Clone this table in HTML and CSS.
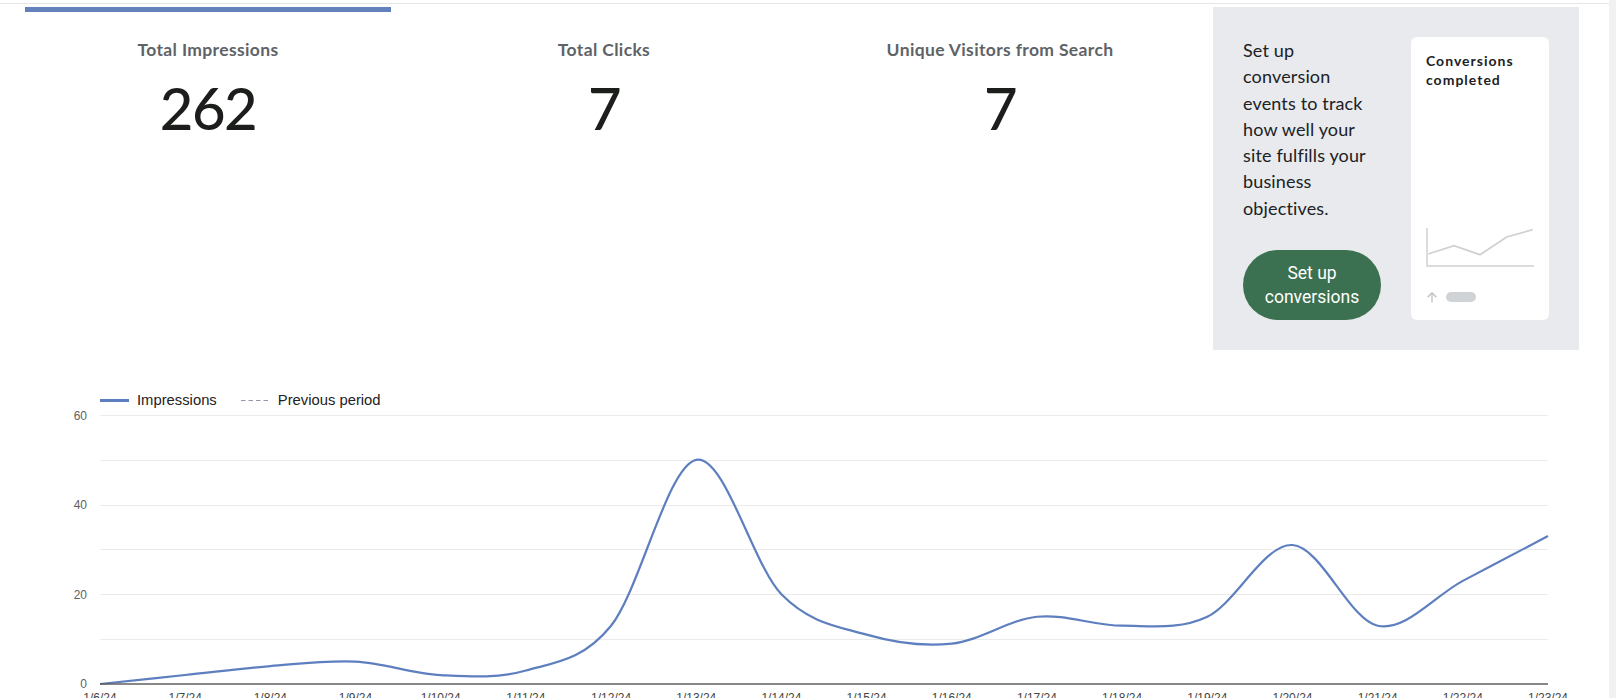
FILE: index.html
```html
<!DOCTYPE html>
<html lang="en">
<head>
<meta charset="utf-8">
<title>Search performance</title>
<link rel="stylesheet" href="styles.css">
</head>
<body>
<div class="page">
  <main class="report">
    <section class="summary">
      <div class="stat stat--active">
        <div class="stat-tab"></div>
        <h3 class="stat-label">Total Impressions</h3>
        <div class="stat-value">262</div>
      </div>
      <div class="stat">
        <div class="stat-tab"></div>
        <h3 class="stat-label">Total Clicks</h3>
        <div class="stat-value">7</div>
      </div>
      <div class="stat">
        <div class="stat-tab"></div>
        <h3 class="stat-label">Unique Visitors from Search</h3>
        <div class="stat-value">7</div>
      </div>
      <div class="promo-wrap">
        <aside class="promo">
          <div class="promo-body">
            <p class="promo-text">Set up<br>conversion<br>events to track<br>how well your<br>site fulfills your<br>business<br>objectives.</p>
            <button class="promo-btn" type="button">Set up<br>conversions</button>
          </div>
          <div class="preview">
            <div class="preview-title">Conversions completed</div>
            <svg class="preview-chart" width="108" height="40" viewBox="0 0 108 40">
              <path d="M1 1V39H108" fill="none" stroke="#dcdcdc" stroke-width="2"/>
              <polyline points="2.3,27 28,18.7 54,27.7 80.7,10 106.7,2.7" fill="none" stroke="#d0d0d0" stroke-width="1.8"/>
            </svg>
            <div class="preview-foot">
              <svg class="preview-arrow" width="12" height="12" viewBox="0 0 12 12">
                <path d="M6 11.5V1.8M1.6 6.2L6 1.8L10.4 6.2" fill="none" stroke="#bdc1c6" stroke-width="1.3"/>
              </svg>
              <span class="preview-pill"></span>
            </div>
          </div>
        </aside>
      </div>
    </section>

    <section class="chart">
      <div class="legend">
        <span class="legend-swatch legend-swatch--solid"></span>
        <span class="legend-label">Impressions</span>
        <svg class="legend-dash" width="27" height="3" viewBox="0 0 27 3">
          <line x1="0" y1="1.5" x2="27" y2="1.5" stroke="#8f96ae" stroke-width="1.2" stroke-dasharray="4.5 3"/>
        </svg>
        <span class="legend-label">Previous period</span>
      </div>
      <svg class="plot" width="1609" height="300" viewBox="0 0 1609 300">
        <g class="grid" stroke="#ebebeb" stroke-width="1">
          <line x1="100" y1="5.5" x2="1548" y2="5.5"/>
          <line x1="100" y1="50.5" x2="1548" y2="50.5"/>
          <line x1="100" y1="95.5" x2="1548" y2="95.5"/>
          <line x1="100" y1="139.5" x2="1548" y2="139.5"/>
          <line x1="100" y1="184.5" x2="1548" y2="184.5"/>
          <line x1="100" y1="229.5" x2="1548" y2="229.5"/>
        </g>
        <g class="y-labels">
          <text x="87" y="9.5">60</text>
          <text x="87" y="99">40</text>
          <text x="87" y="188.5">20</text>
          <text x="87" y="278">0</text>
        </g>
        <path id="impr-line" class="series" d=""/>
        <line class="baseline" x1="100" y1="274" x2="1548" y2="274"/>
        <g class="x-labels">
          <text x="100" y="291.5">1/6/24</text>
          <text x="185.18" y="291.5">1/7/24</text>
          <text x="270.35" y="291.5">1/8/24</text>
          <text x="355.53" y="291.5">1/9/24</text>
          <text x="440.71" y="291.5">1/10/24</text>
          <text x="525.88" y="291.5">1/11/24</text>
          <text x="611.06" y="291.5">1/12/24</text>
          <text x="696.24" y="291.5">1/13/24</text>
          <text x="781.41" y="291.5">1/14/24</text>
          <text x="866.59" y="291.5">1/15/24</text>
          <text x="951.76" y="291.5">1/16/24</text>
          <text x="1036.94" y="291.5">1/17/24</text>
          <text x="1122.12" y="291.5">1/18/24</text>
          <text x="1207.29" y="291.5">1/19/24</text>
          <text x="1292.47" y="291.5">1/20/24</text>
          <text x="1377.65" y="291.5">1/21/24</text>
          <text x="1462.82" y="291.5">1/22/24</text>
          <text x="1548" y="291.5">1/23/24</text>
        </g>
      </svg>
    </section>
  </main>
  <div class="scrollbar"></div>
</div>
<script src="script.js"></script>
</body>
</html>
```

FILE: styles.css
```css
* { box-sizing: border-box; }

html, body {
  margin: 0;
  padding: 0;
  background: #ffffff;
}

body {
  font-family: "Lato", "Noto Sans", sans-serif;
  color: #202124;
}

.page {
  display: flex;
  height: 698px;
  overflow: hidden;
}

.report {
  flex: 1;
  min-width: 0;
  padding-top: 3px;
}

.scrollbar {
  flex: none;
  width: 7px;
  background: #f1f1f1;
}

/* ---------- summary row ---------- */
.summary {
  display: grid;
  grid-template-columns: repeat(4, 396px);
  padding: 3px 0 0 10px;
  border-top: 1px solid #e6e6e6;
}

.stat {
  padding: 0 15px;
  text-align: center;
}

.stat-tab {
  height: 5px;
}

.stat--active .stat-tab {
  background: #6382bb;
}

.stat-label {
  margin: 26px 0 0;
  font-size: 17.5px;
  line-height: 24px;
  font-weight: 700;
  letter-spacing: 0.35px;
  color: #5f6368;
}

.stat-value {
  margin-top: 11px;
  font-size: 58px;
  line-height: 70px;
  font-weight: 500;
  color: #1c1e1c;
  letter-spacing: -1.5px;
}

/* ---------- conversions promo ---------- */
.promo-wrap {
  padding: 0 15px;
}

.promo {
  height: 343px;
  background: #e8eaed;
  padding: 30px;
  display: flex;
  gap: 30px;
}

.promo-body {
  width: 138px;
  flex: none;
  display: flex;
  flex-direction: column;
  justify-content: space-between;
}

.promo-text {
  margin: 0;
  font-size: 18px;
  line-height: 26.3px;
  letter-spacing: 0.15px;
  color: #202124;
}

.promo-btn {
  width: 138px;
  height: 70px;
  padding: 11px 0;
  border: 0;
  border-radius: 35px;
  background: #3b7150;
  color: #ffffff;
  font-family: Roboto, "Liberation Sans", Arial, sans-serif;
  font-size: 17.5px;
  line-height: 24px;
  font-weight: 400;
}

.preview {
  width: 138px;
  flex: none;
  background: #ffffff;
  border-radius: 6px;
  padding: 14px 15px 18px;
  display: flex;
  flex-direction: column;
}

.preview-title {
  font-size: 14px;
  line-height: 19px;
  font-weight: 700;
  letter-spacing: 1px;
  color: #202124;
}

.preview-chart {
  display: block;
  margin-top: auto;
}

.preview-foot {
  margin-top: 24px;
  height: 11px;
  display: flex;
  align-items: center;
  gap: 8px;
}

.preview-arrow {
  display: block;
}

.preview-pill {
  width: 30px;
  height: 10px;
  border-radius: 5px;
  background: #d0d3d6;
}

/* ---------- chart ---------- */
.chart {
  margin-top: 40px;
}

.legend {
  display: flex;
  align-items: center;
  height: 20px;
  padding-left: 100px;
  font-family: "Liberation Sans", Arial, sans-serif;
  font-size: 14.8px;
  line-height: 20px;
  color: #222222;
}

.legend-swatch--solid {
  width: 29px;
  height: 3px;
  background: #5e7fbf;
  margin-right: 8px;
}

.legend-dash {
  display: block;
  margin: 0 10px 0 24px;
}

.plot {
  display: block;
}

.plot text {
  font-family: "Liberation Sans", Arial, sans-serif;
  font-size: 12px;
}

.y-labels text {
  text-anchor: end;
  fill: #5f5f5f;
}

.x-labels text {
  text-anchor: middle;
  fill: #444444;
}

.series {
  fill: none;
  stroke: #5e7fbf;
  stroke-width: 2.2;
  stroke-linejoin: round;
}

.baseline {
  stroke: #5f5f5f;
  stroke-width: 1.6;
}
```

FILE: script.js
```js
(function () {
  var vals = [0, 2, 4, 5, 2, 3, 13, 50, 20, 11, 9, 15, 13, 15, 31, 13, 23, 33];
  var x0 = 100, x1 = 1548, y0 = 274, unit = 4.4833;
  var step = (x1 - x0) / (vals.length - 1);
  var pts = vals.map(function (v, i) { return [x0 + i * step, y0 - v * unit]; });
  function f(n) { return n.toFixed(2); }
  var d = 'M' + f(pts[0][0]) + ',' + f(pts[0][1]);
  var k = 1 / 6;
  for (var i = 0; i < pts.length - 1; i++) {
    var p0 = pts[Math.max(i - 1, 0)];
    var p1 = pts[i];
    var p2 = pts[i + 1];
    var p3 = pts[Math.min(i + 2, pts.length - 1)];
    var c1x = p1[0] + (p2[0] - p0[0]) * k, c1y = p1[1] + (p2[1] - p0[1]) * k;
    var c2x = p2[0] - (p3[0] - p1[0]) * k, c2y = p2[1] - (p3[1] - p1[1]) * k;
    d += ' C' + f(c1x) + ',' + f(c1y) + ' ' + f(c2x) + ',' + f(c2y) + ' ' + f(p2[0]) + ',' + f(p2[1]);
  }
  document.getElementById('impr-line').setAttribute('d', d);
})();
```
